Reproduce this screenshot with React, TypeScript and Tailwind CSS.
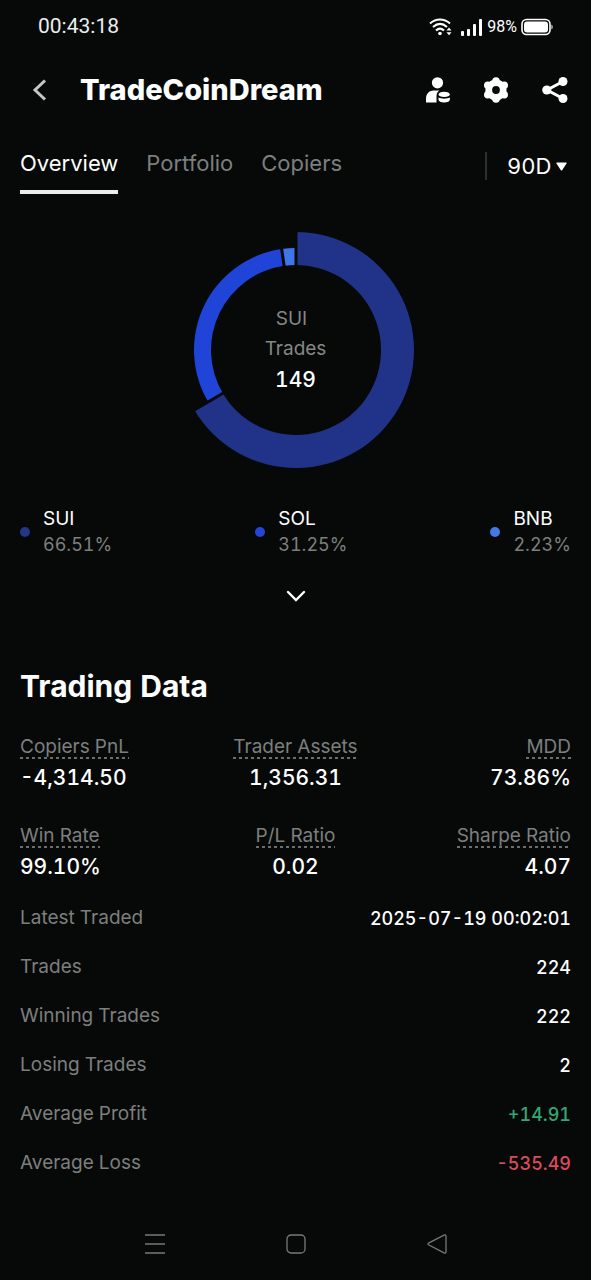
import { useState, type ReactNode } from 'react';

const slices = [
    { name: 'SUI', pct: 66.51, outer: 118, fill: '#203388', dot: 'bg-[#24358a]' },
    { name: 'SOL', pct: 31.25, outer: 102, fill: '#2044d8', dot: 'bg-[#2446d8]' },
    { name: 'BNB', pct: 2.23, outer: 102, fill: '#3f75e8', dot: 'bg-[#4478e8]' },
];

const metrics = [
    { label: 'Copiers PnL', value: '-4,314.50', align: 'items-start' },
    { label: 'Trader Assets', value: '1,356.31', align: 'items-center' },
    { label: 'MDD', value: '73.86%', align: 'items-end' },
    { label: 'Win Rate', value: '99.10%', align: 'items-start' },
    { label: 'P/L Ratio', value: '0.02', align: 'items-center' },
    { label: 'Sharpe Ratio', value: '4.07', align: 'items-end' },
];

const rows = [
    { label: 'Latest Traded', value: '2025-07-19 00:02:01', color: 'text-white' },
    { label: 'Trades', value: '224', color: 'text-white' },
    { label: 'Winning Trades', value: '222', color: 'text-white' },
    { label: 'Losing Trades', value: '2', color: 'text-white' },
    { label: 'Average Profit', value: '+14.91', color: 'text-[#35a575]' },
    { label: 'Average Loss', value: '-535.49', color: 'text-[#dc4a5c]' },
];

const tabs = ['Overview', 'Portfolio', 'Copiers'];

const INNER = 85;

function point(r: number, pct: number) {
    const a = (pct / 100) * Math.PI * 2;
    return `${120 + r * Math.sin(a)} ${120 - r * Math.cos(a)}`;
}

function StatusBar() {
    return (
        <div className="flex h-[54px] items-center justify-between px-[38px] font-[Roboto,sans-serif]">
            <time className="text-[21px] text-[#eceeed]">00:43:18</time>
            <div className="flex items-center gap-1 text-white">
                <svg className="h-[18px] w-[24px]" viewBox="0 0 24 18" fill="none" stroke="currentColor" strokeWidth="2">
                    <path d="M1 5.5C7 .2 15 .2 21 5.5" />
                    <path d="M4 9c4.5-4 9.5-4 14 0" />
                    <path d="M7 12.5c2.5-2.4 5.5-2.4 8 0" />
                    <circle cx="11" cy="15.5" r="1.8" fill="currentColor" stroke="none" />
                    <path d="M17.5 12.5 20 9.5l2.5 3zM17.5 14.2h5L20 17.2z" fill="currentColor" stroke="none" />
                </svg>
                <svg className="ml-1 h-[18px] w-[22px]" viewBox="0 0 22 18" fill="currentColor">
                    <rect x="0" y="13" width="3" height="5" rx="1" />
                    <rect x="6" y="11" width="3" height="7" rx="1" />
                    <rect x="12" y="6" width="3" height="12" rx="1" />
                    <rect x="18" y="1" width="3" height="17" rx="1" />
                </svg>
                <span className="text-base">98%</span>
                <svg className="h-[18px] w-[32px]" viewBox="0 0 32 18" fill="none">
                    <rect x="1" y="1.5" width="28" height="15" rx="4.5" stroke="currentColor" strokeWidth="1.6" />
                    <rect x="3" y="3.5" width="24" height="11" rx="3" fill="currentColor" />
                    <path d="M30.5 6.5c1.5.8 1.5 4.2 0 5z" fill="currentColor" />
                </svg>
            </div>
        </div>
    );
}

function IconButton({ label, children }: { label: string; children: ReactNode }) {
    return (
        <button type="button" aria-label={label} className="flex items-center justify-center text-white">
            {children}
        </button>
    );
}

function Header() {
    return (
        <header className="flex h-[72px] items-center pr-[22px] pl-[32px]">
            <IconButton label="Back">
                <svg className="h-6 w-4 text-[#c4c7c6]" viewBox="0 0 16 24" fill="none" stroke="currentColor" strokeWidth="3">
                    <path d="M13 2.5 3 12l10 9.5" />
                </svg>
            </IconButton>
            <h1 className="ml-8 flex-1 text-[29px] font-extrabold">TradeCoinDream</h1>
            <div className="flex items-center gap-8">
                <IconButton label="Copy settings">
                    <svg className="h-[26px] w-[26px]" viewBox="0 0 26 26" fill="currentColor">
                        <circle cx="12.5" cy="5.8" r="5.6" />
                        <path d="M1 25.5V22c0-5 3-8.5 7.5-8.5h6c-2 1.3-3 3-3 5.5v6.5z" />
                        <path d="M13.5 17.6c0-1.7 2.4-2.9 5.7-2.9s5.7 1.2 5.7 2.9-2.4 2.3-5.7 2.3-5.7-.6-5.7-2.3z" />
                        <path d="M13.5 20.6c2.8 1.5 8.6 1.5 11.4 0v2c0 1.9-2.4 2.9-5.7 2.9s-5.7-1-5.7-2.9z" />
                    </svg>
                </IconButton>
                <IconButton label="Settings">
                    <svg className="h-[26px] w-[26px]" viewBox="0 0 26 26" fill="currentColor">
                        <circle cx="13" cy="13" r="10.6" />
                        <circle cx="13" cy="4" r="3.8" />
                        <circle cx="13" cy="22" r="3.8" />
                        <circle cx="21.2" cy="8.3" r="3.8" />
                        <circle cx="21.2" cy="17.7" r="3.8" />
                        <circle cx="4.8" cy="8.3" r="3.8" />
                        <circle cx="4.8" cy="17.7" r="3.8" />
                        <circle cx="13" cy="13" r="3.9" fill="#060908" />
                    </svg>
                </IconButton>
                <IconButton label="Share">
                    <svg className="h-[28px] w-[28px]" viewBox="0 0 28 28" fill="currentColor">
                        <path d="M22 5.5 6 14l16 8.5" fill="none" stroke="currentColor" strokeWidth="3" />
                        <circle cx="22" cy="5.5" r="4.5" />
                        <circle cx="5.8" cy="14" r="4.6" />
                        <circle cx="22" cy="22.5" r="4.5" />
                    </svg>
                </IconButton>
            </div>
        </header>
    );
}

function Donut() {
    let sum = 0;
    const parts = slices.map((s) => {
        const start = sum;
        sum += s.pct;
        return { ...s, start, end: sum };
    });

    return (
        <div className="relative mx-auto h-60 w-60">
            <svg className="h-full w-full" viewBox="0 0 240 240">
                {parts.map((p) => {
                    const large = p.pct > 50 ? 1 : 0;
                    return (
                        <path
                            key={p.name}
                            fill={p.fill}
                            d={`M${point(p.outer, p.start)}A${p.outer} ${p.outer} 0 ${large} 1 ${point(p.outer, p.end)}L${point(INNER, p.end)}A${INNER} ${INNER} 0 ${large} 0 ${point(INNER, p.start)}Z`}
                        />
                    );
                })}
                {parts.map((p) => (
                    <path key={p.name} d={`M${point(INNER - 2, p.start)}L${point(120, p.start)}`} stroke="#060908" strokeWidth="3" />
                ))}
            </svg>
            <div className="absolute inset-0 flex flex-col items-center justify-center text-[19px] leading-[30px] text-[#858786]">
                <span className="pr-2">SUI</span>
                <span>Trades</span>
                <span className="text-[21px] leading-8 font-medium text-white">149</span>
            </div>
        </div>
    );
}

export default function App() {
    const [tab, setTab] = useState('Overview');

    return (
        <div className="min-h-screen bg-[#060908] font-[Inter,sans-serif] text-white tabular-nums">
            <StatusBar />
            <Header />

            <nav className="flex items-center justify-between px-5 pt-[22px]">
                <div className="flex gap-7">
                    {tabs.map((t) => (
                        <button
                            key={t}
                            type="button"
                            onClick={() => setTab(t)}
                            className={`border-b-4 pb-3 text-[22px] leading-[30px] ${t === tab ? 'border-[#eceeed] text-white' : 'border-transparent text-[#7d7f7e]'}`}
                        >
                            {t}
                        </button>
                    ))}
                </div>
                <div className="mb-2.5 flex items-center border-l-2 border-[#2c2f2e] pr-1 pl-5">
                    <select aria-label="Period" defaultValue="90D" className="appearance-none bg-transparent text-[22px] leading-7 text-white">
                        <option>90D</option>
                    </select>
                    <svg className="ml-1 h-[9px] w-[11px]" viewBox="0 0 11 9" fill="currentColor" aria-hidden="true">
                        <path d="M1 .5h9q1 0 .5 1L6.3 8q-.8 1-1.6 0L.5 1.5Q0 .5 1 .5z" />
                    </svg>
                </div>
            </nav>

            <main className="px-5 pt-9">
                <Donut />

                <ul className="mt-9 flex justify-between">
                    {slices.map((s) => (
                        <li key={s.name} className="flex items-center gap-[13px]">
                            <span className={`h-2.5 w-2.5 rounded-full ${s.dot}`} />
                            <div className="leading-[26px]">
                                <p className="text-[19px] leading-[26px]">{s.name}</p>
                                <p className="text-lg leading-[26px] text-[#7d7f7e]">{s.pct.toFixed(2)}%</p>
                            </div>
                        </li>
                    ))}
                </ul>

                <button type="button" aria-label="Show more" className="mx-auto mt-[26px] flex h-6 w-6 items-center justify-center">
                    <svg className="h-3 w-5" viewBox="0 0 20 12" fill="none" stroke="currentColor" strokeWidth="2.4" strokeLinecap="round">
                        <path d="m2 2 8 8 8-8" />
                    </svg>
                </button>

                <h2 className="mt-[60px] text-[30px] leading-9 font-bold">Trading Data</h2>

                <dl className="mt-[29px] grid grid-cols-3 gap-y-[27px]">
                    {metrics.map((m) => (
                        <div key={m.label} className={`flex flex-col ${m.align}`}>
                            <dt className="text-[19px] leading-7 whitespace-nowrap text-[#7d7f7e]">
                                {m.label}
                                <span className="-mt-1 block h-0.5 bg-[repeating-linear-gradient(to_right,#6c6e6d_0_3px,transparent_3px_6px)]" />
                            </dt>
                            <dd className="mt-0.5 text-[21px] leading-[34px] font-medium">{m.value}</dd>
                        </div>
                    ))}
                </dl>

                <dl className="mt-2.5">
                    {rows.map((r) => (
                        <div key={r.label} className="flex h-[49px] items-center justify-between">
                            <dt className="text-[19px] text-[#7d7f7e]">{r.label}</dt>
                            <dd className={`text-lg font-medium ${r.color}`}>{r.value}</dd>
                        </div>
                    ))}
                </dl>
            </main>

            <footer className="flex items-center justify-center gap-[121px] pt-[46px] pb-6 text-[#777978]">
                <button type="button" aria-label="Recent apps">
                    <svg className="h-5 w-5" viewBox="0 0 20 20" stroke="currentColor" strokeWidth="1.5">
                        <path d="M0 1h20M0 10h20M0 19h20" />
                    </svg>
                </button>
                <button type="button" aria-label="Home">
                    <svg className="h-5 w-5" viewBox="0 0 20 20" fill="none" stroke="currentColor" strokeWidth="1.3">
                        <rect x="1" y="1" width="18" height="18" rx="4" />
                    </svg>
                </button>
                <button type="button" aria-label="Back to previous">
                    <svg className="h-5 w-5" viewBox="0 0 20 20" fill="none" stroke="currentColor" strokeWidth="1.3">
                        <path d="M1.5 9.2 17 1.2q2-.8 2 1.3v15q0 2.1-2 1.3L1.5 10.8q-1.3-.8 0-1.6z" />
                    </svg>
                </button>
            </footer>
        </div>
    );
}
